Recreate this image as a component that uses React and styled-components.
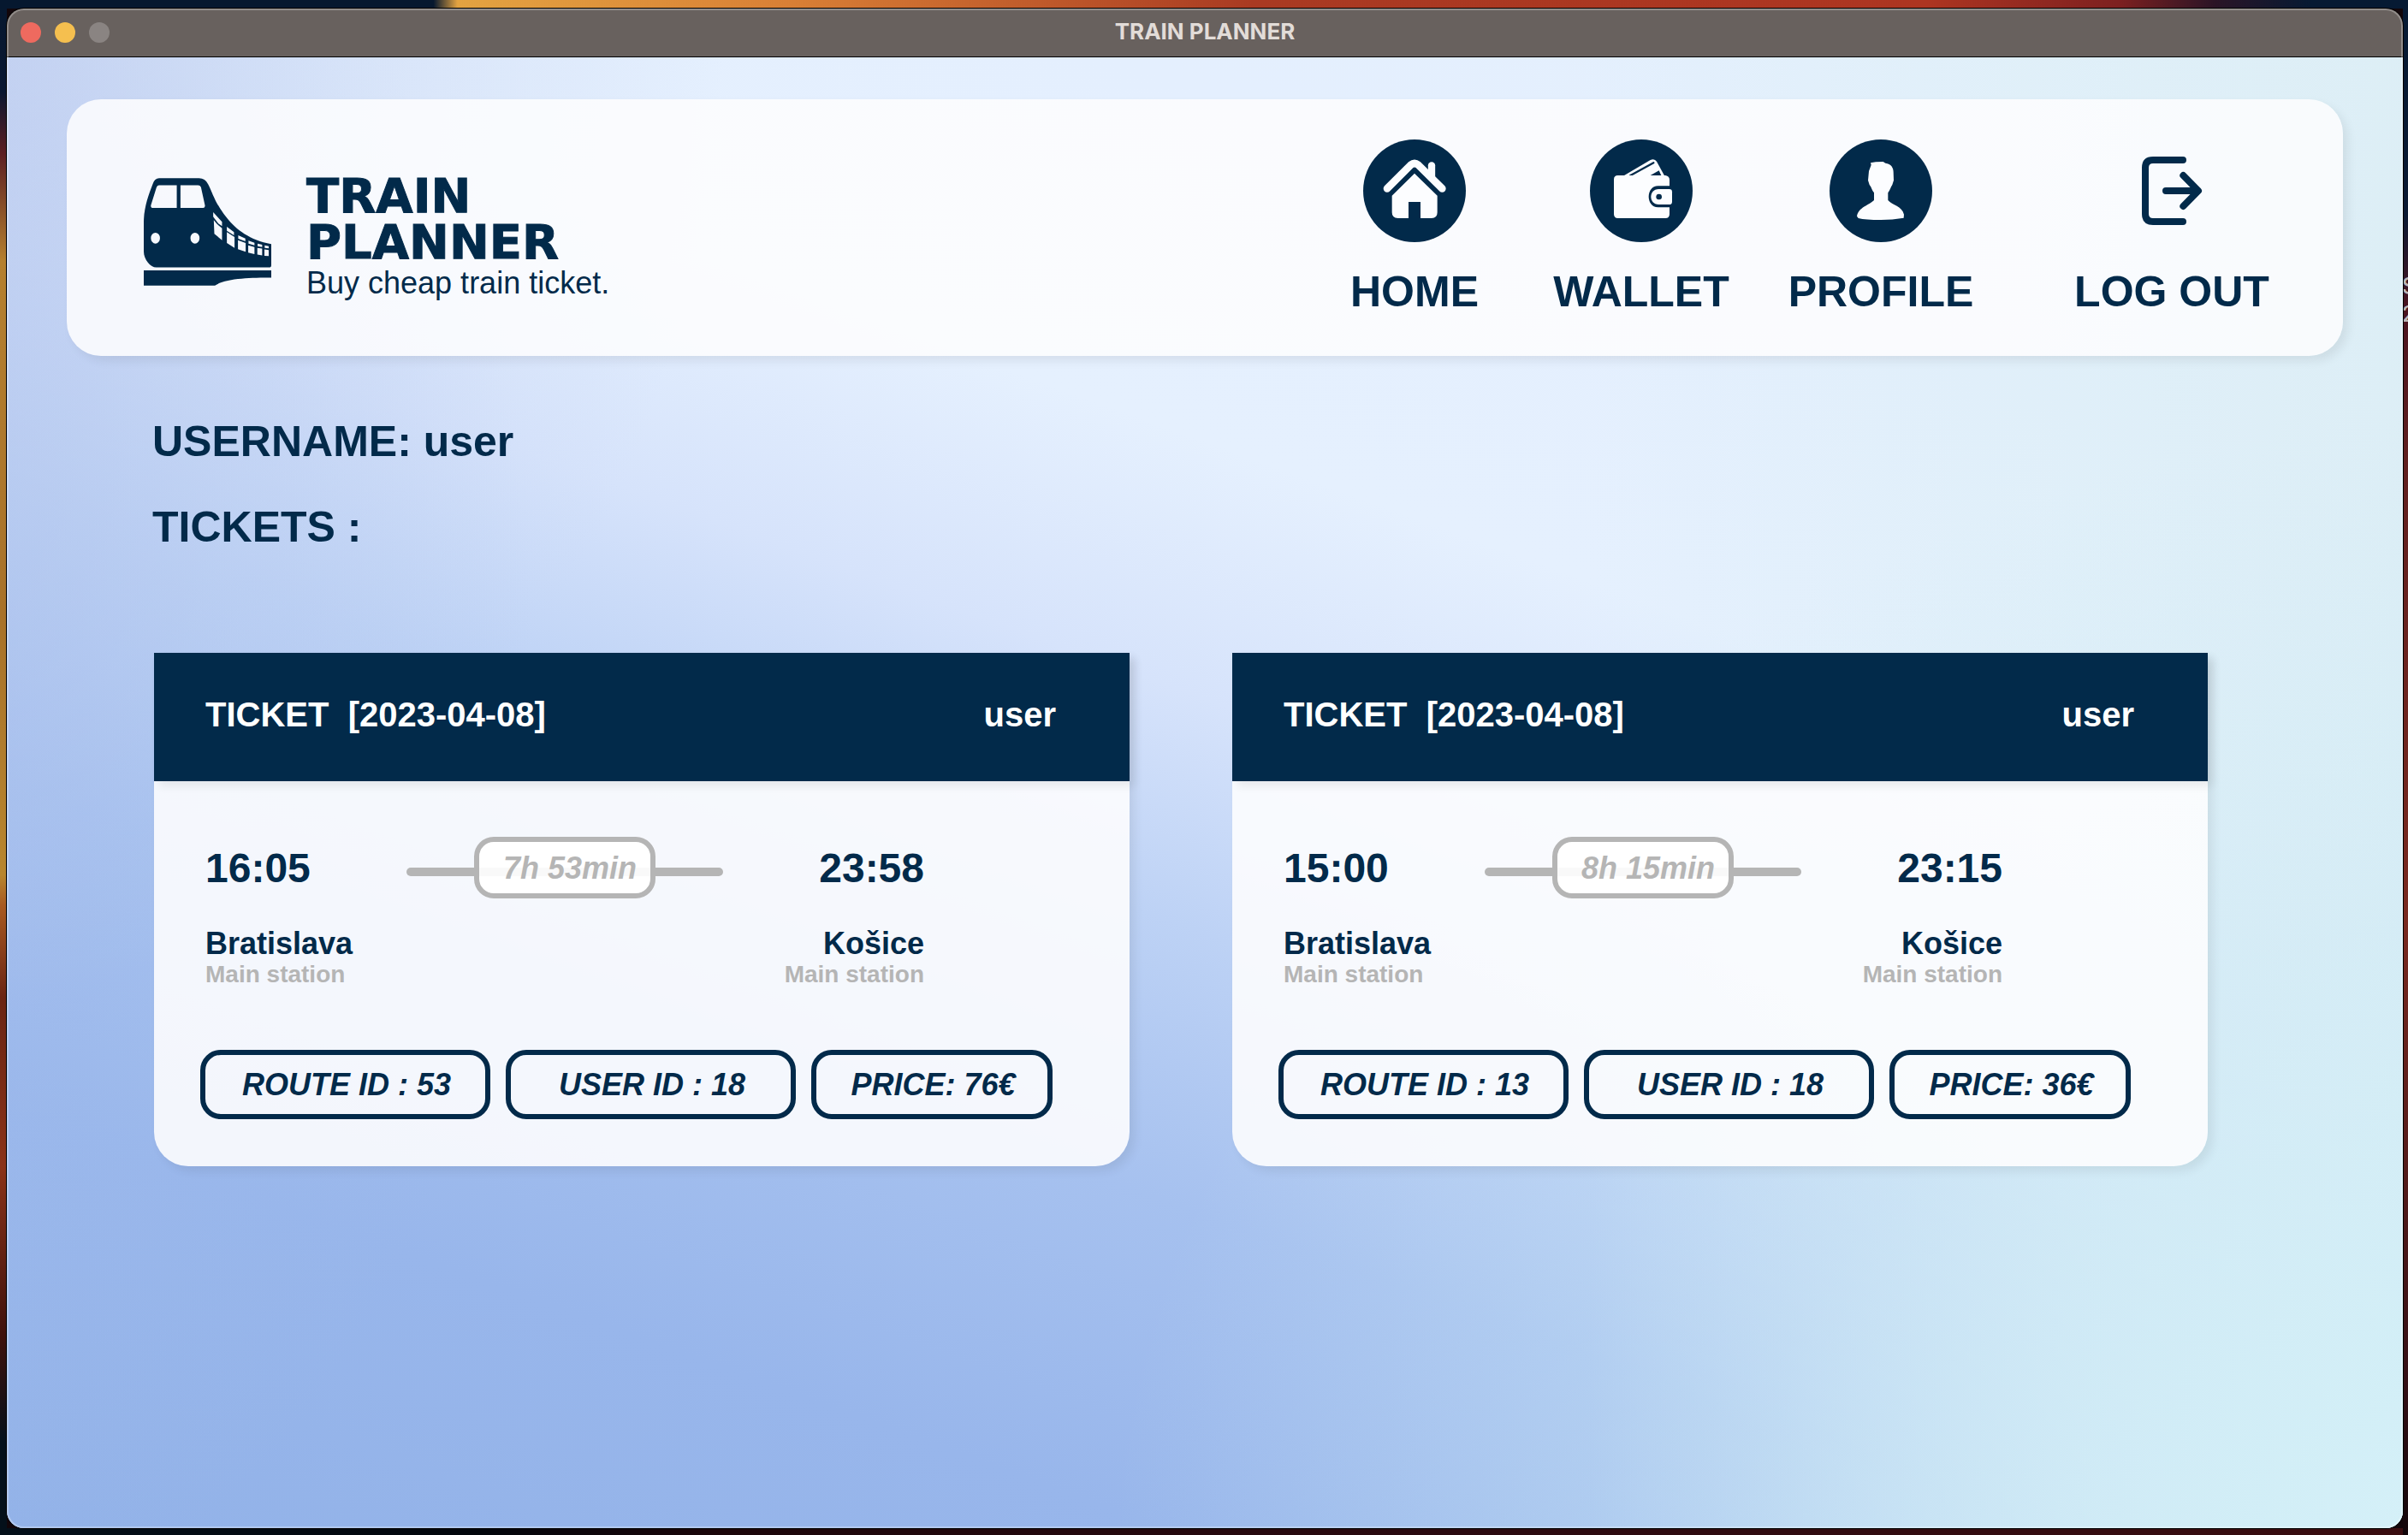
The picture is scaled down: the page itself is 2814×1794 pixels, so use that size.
import React from "react";
import styled, { createGlobalStyle } from "styled-components";

const navy = "#022a4a";
const grey = "#b5b5b5";

const GlobalStyle = createGlobalStyle`
  *, *::before, *::after { box-sizing: border-box; }
  body {
    margin: 0;
    font-family: "Liberation Sans", Arial, sans-serif;
    color: ${navy};
  }
`;

const Desktop = styled.div`
  position: relative;
  display: flex;
  min-height: 100vh;
  padding: 10px 6px 8px 8px;
  overflow: hidden;
  background-color: #12060a;
  background-image:
    linear-gradient(135deg, #06182f 50%, transparent 50%),
    linear-gradient(90deg, #06182f 0%, #06182f 18%, #e3a341 19%, #d97f35 33%, #a93a22 52%, #ad3521 80%, #7d2020 88%, #2a1426 92%, #061a33 96%),
    linear-gradient(180deg, #06182f 0%, #0a1730 6%, #5c1f22 10%, #b5802f 17%, #a8722a 40%, #b8862e 57%, #a85a22 59%, #6a2513 65%, #8a3318 76%, #3f120c 87%, #04101a 94%, #04101a 100%),
    linear-gradient(180deg, #061a33 0%, #0b1a33 14%, #4a1420 20%, #61201f 30%, #7a2a20 60%, #351016 90%, #12060a 100%),
    linear-gradient(90deg, #04101a 0%, #02060c 20%, #1c060a 30%, #2b0a10 60%, #3a0d10 100%);
  background-size: 538px 10px, 100% 10px, 8px 100%, 6px 100%, 100% 8px;
  background-position: 0 0, 0 0, 0 0, 100% 0, 0 100%;
  background-repeat: no-repeat;
`;

const DesktopLabel = styled.div`
  position: absolute;
  top: 318px;
  right: -11px;
  width: 18px;
  font: 500 25px/33px Inter, sans-serif;
  color: #bdb6b6;
`;

const Window = styled.div`
  position: relative;
  flex: 1;
  display: flex;
  flex-direction: column;
  border-radius: 20px;
  overflow: hidden;
  box-shadow: 0 0 0 1px #000;

  &::after {
    content: "";
    position: absolute;
    inset: 0;
    border: 2px solid rgba(255, 255, 255, 0.28);
    border-radius: 20px;
    pointer-events: none;
  }
`;

const TitleBar = styled.div`
  display: grid;
  grid-template-columns: 1fr auto 1fr;
  align-items: center;
  height: 57px;
  padding: 0 16px;
  background: #68615e;
  border-bottom: 1px solid #000;
`;

const Lights = styled.div`
  display: flex;
  gap: 16px;
`;

const Light = styled.button`
  width: 24px;
  height: 24px;
  padding: 0;
  border: 0;
  border-radius: 50%;
  background: ${(p) => p.$color};
`;

const WindowTitle = styled.div`
  font: 700 26px/32px Inter, sans-serif;
  color: #e2dcd8;
  padding-bottom: 2px;
`;

const Content = styled.main`
  flex: 1;
  padding: 49px 70px;
  background-color: #d5e3fb;
  background-image:
    radial-gradient(ellipse 62% 80% at 108% 104%, #d8f2fa 0%, rgba(210, 239, 247, 0.9) 22%, rgba(204, 234, 245, 0.45) 58%, rgba(200, 230, 244, 0) 100%),
    linear-gradient(270deg, rgba(220, 238, 245, 0.9) 0%, rgba(221, 239, 246, 0.65) 13%, rgba(226, 241, 250, 0) 34%),
    radial-gradient(ellipse 26% 66% at -4% 42%, rgba(160, 184, 234, 0.45) 0%, rgba(165, 190, 236, 0.2) 50%, rgba(180, 200, 240, 0) 100%),
    radial-gradient(ellipse 36% 70% at -6% -4%, rgba(190, 203, 238, 0.9) 0%, rgba(198, 212, 242, 0.5) 50%, rgba(214, 226, 248, 0) 100%),
    linear-gradient(200deg, #e4f0fc 0%, #e4effe 20%, #e5f0fe 35%, #d6e3fb 46%, #bdd2f5 56%, #a6c1ef 68%, #98b6eb 82%, #92b2e8 100%);
`;

const Header = styled.header`
  display: flex;
  justify-content: space-between;
  align-items: flex-start;
  height: 300px;
  padding: 47px 80px 0 90px;
  border-radius: 40px;
  background: rgba(253, 253, 254, 0.88);
  box-shadow: 6px 6px 12px rgba(0, 0, 0, 0.07);
`;

const Brand = styled.a`
  display: flex;
  gap: 41px;
  padding-top: 45px;
  color: inherit;
  text-decoration: none;
`;

const BrandName = styled.div`
  margin-top: -6px;
  font: 700 56px/54px "DejaVu Sans", sans-serif;
  -webkit-text-stroke: 1px ${navy};
`;

const Tagline = styled.div`
  font-size: 36px;
  line-height: 42px;
`;

const Nav = styled.nav`
  display: flex;
`;

const NavItem = styled.a`
  display: flex;
  flex-direction: column;
  align-items: center;
  gap: 30px;
  width: 240px;
  margin-left: ${(p) => p.$gap || 0}px;
  padding: 0;
  border: 0;
  background: none;
  color: inherit;
  font: 700 50px/56px "Liberation Sans", Arial, sans-serif;
  text-decoration: none;
  white-space: nowrap;

  svg { display: block; }
`;

const Summary = styled.section`
  padding: 72px 100px 119px;
`;

const Fact = styled.h2`
  margin: 0;
  font-size: 50px;
  line-height: 56px;

  & + & { margin-top: 44px; }
`;

const Tickets = styled.section`
  display: grid;
  grid-template-columns: repeat(2, 1fr);
  gap: 120px;
  padding: 0 158px 0 102px;
`;

const Card = styled.article`
  border-radius: 0 0 40px 40px;
  background: rgba(253, 253, 254, 0.9);
  box-shadow: 6px 6px 12px rgba(0, 0, 0, 0.07);
`;

const CardHead = styled.div`
  display: flex;
  justify-content: space-between;
  align-items: center;
  height: 150px;
  padding: 0 86px 6px 60px;
  background: ${navy};
  box-shadow: 6px 6px 10px rgba(0, 0, 0, 0.07);
  color: #fff;
  font-size: 40px;
  line-height: 46px;
  font-weight: 700;
  white-space: pre;
`;

const CardBody = styled.div`
  padding: 65px 90px 55px 54px;
`;

const Journey = styled.div`
  display: grid;
  grid-template-columns: 1fr 370px 1fr;
  align-items: center;
  row-gap: 33px;
  padding: 0 150px 0 6px;
  font-weight: 700;
`;

const Time = styled.div`
  padding-top: 2px;
  font-size: 48px;
  line-height: 56px;
  text-align: ${(p) => p.$align || "left"};
`;

const Rail = styled.div`
  display: flex;
  align-items: center;
  height: 72px;

  &::before, &::after {
    content: "";
    flex: 1;
    height: 10px;
    margin-top: 10px;
    background: ${grey};
  }
  &::before { border-radius: 5px 0 0 5px; }
  &::after { border-radius: 0 5px 5px 0; }
`;

const Duration = styled.div`
  width: 212px;
  height: 72px;
  padding-left: 12px;
  border: 6px solid ${grey};
  border-radius: 23px;
  background: linear-gradient(#f9f9f9, #f9f9f9) 0 30px / 100% 10px no-repeat #fff;
  color: ${grey};
  font-size: 36px;
  line-height: 62px;
  font-style: italic;
  text-align: center;
`;

const Stop = styled.div`
  grid-column: ${(p) => p.$column};
  text-align: ${(p) => p.$align || "left"};
`;

const City = styled.div`
  font-size: 36px;
  line-height: 40px;
`;

const Station = styled.div`
  color: ${grey};
  font-size: 28px;
  line-height: 32px;
  white-space: nowrap;
`;

const Chips = styled.div`
  display: flex;
  gap: 18px;
  margin-top: 72px;
`;

const Chip = styled.div`
  flex: ${(p) => p.$grow} 1 0;
  height: 81px;
  padding-left: 3px;
  border: 6px solid ${navy};
  border-radius: 24px;
  font-size: 36px;
  line-height: 69px;
  font-weight: 700;
  font-style: italic;
  text-align: center;
  white-space: nowrap;
`;

const TrainLogo = () => (
  <svg width="149" height="126" viewBox="24 24 448 378" aria-hidden="true">
    <path
      fill={navy}
      fillRule="evenodd"
      d="M78 24H218Q240 24 250 45C262 68 272 100 292 130C330 190 380 238 472 256V330Q472 338 464 338H68C48 338 24 310 24 282V180C24 130 40 84 56 44Q62 24 78 24Z
      M78 49Q72 49 69 56L49 120Q48 129 57 129H140V49Z
      M153 49V129H232Q240 129 239 120L225 56Q222 49 215 49Z
      M65 216A16 19 0 1 0 65 254A16 19 0 1 0 65 216Z
      M204 216A16 19 0 1 0 204 254A16 19 0 1 0 204 216Z
      M268 144L299 178V193L286 184L268 160Z M270 172L282 186L299 200V242L272 220Z
      M316 195L341 214V225L316 209Z M316 214L343 231V269L316 252Z
      M356 225L381 236V246L356 237Z M355 242L382 252V283L355 274Z
      M392 244L413 251V260L392 254Z M391 260L413 266V291L391 286Z
      M424 254L440 258V266L424 263Z M423 269L440 272V296L423 293Z
      M449 260L463 263V271L449 269Z M448 275L463 277V298L448 297Z"
    />
    <path fill={navy} d="M24 348H472V374C400 374 310 376 274 402H24Z" />
  </svg>
);

const HomeIcon = () => (
  <svg width="120" height="120" viewBox="9 9 360 360" aria-hidden="true">
    <circle cx="189" cy="189" r="180" fill={navy} />
    <path fill="#fcfdff" d="M189 128L269 206V265Q269 285 249 285H210V228H168V285H131Q110 285 110 265V206Z" />
    <path d="M93 181L176 98Q189 88 202 98L286 181" fill="none" stroke="#fcfdff" strokeWidth="26" strokeLinecap="round" />
    <path d="M249 100V140" stroke="#fcfdff" strokeWidth="25" strokeLinecap="round" />
  </svg>
);

const WalletIcon = () => (
  <svg width="120" height="120" viewBox="9 9 360 360" aria-hidden="true">
    <circle cx="189" cy="189" r="180" fill={navy} />
    <path fill="#fcfdff" d="M128 136L221 81Q235 74 243 86L270 136Z" />
    <path d="M150 136L232 91" stroke={navy} strokeWidth="7" strokeLinecap="round" />
    <path fill={navy} d="M221 135L251 118L259 135Z" />
    <path fill="#fcfdff" d="M107 135H274Q288 138 288 151V172H248C204 172 204 247 248 247H288V271Q288 285 274 285H107Q93 285 93 271V149Q93 135 107 135Z" />
    <path fill="#fcfdff" d="M250 183H287Q297 183 297 193V227Q297 237 287 237H250C214 237 214 183 250 183Z" />
    <circle cx="251" cy="210" r="10" fill={navy} />
  </svg>
);

const ProfileIcon = () => (
  <svg width="120" height="120" viewBox="24 9 360 360" aria-hidden="true">
    <circle cx="204" cy="189" r="180" fill={navy} />
    <path
      fill="#fcfdff"
      d="M168 91L186 88L212 87L220 92C240 94 248 108 248 124L249 152L244 168C238 176 236 188 229 196V222C244 240 278 242 285 272L284 284Q244 291 204 291Q150 291 125 285L120 278C126 246 162 240 180 222V196C172 188 172 176 164 168L159 152L162 120L170 98Z"
    />
  </svg>
);

const LogoutIcon = () => (
  <svg width="120" height="120" viewBox="1044 9 360 360" aria-hidden="true">
    <g fill="none" stroke={navy} strokeWidth="24" strokeLinecap="round" strokeLinejoin="round">
      <path d="M1263 81H1158Q1131 81 1131 108V270Q1131 297 1158 297H1263" />
      <path d="M1203 189H1314M1264 135L1317 189L1264 243" />
    </g>
  </svg>
);

const tickets = [
  { date: "2023-04-08", user: "user", depart: "16:05", arrive: "23:58", duration: "7h 53min", from: "Bratislava", to: "Košice", route: 53, userId: 18, price: 76 },
  { date: "2023-04-08", user: "user", depart: "15:00", arrive: "23:15", duration: "8h 15min", from: "Bratislava", to: "Košice", route: 13, userId: 18, price: 36 },
];

const Ticket = ({ t }) => (
  <Card>
    <CardHead>
      <span>{`TICKET  [${t.date}]`}</span>
      <span>{t.user}</span>
    </CardHead>
    <CardBody>
      <Journey>
        <Time>{t.depart}</Time>
        <Rail>
          <Duration>{t.duration}</Duration>
        </Rail>
        <Time $align="right">{t.arrive}</Time>
        <Stop $column="1">
          <City>{t.from}</City>
          <Station>Main station</Station>
        </Stop>
        <Stop $column="3" $align="right">
          <City>{t.to}</City>
          <Station>Main station</Station>
        </Stop>
      </Journey>
      <Chips>
        <Chip $grow={34}>{`ROUTE ID : ${t.route}`}</Chip>
        <Chip $grow={34}>{`USER ID : ${t.userId}`}</Chip>
        <Chip $grow={28}>{`PRICE: ${t.price}€`}</Chip>
      </Chips>
    </CardBody>
  </Card>
);

export default function App() {
  return (
    <Desktop>
      <GlobalStyle />
      <DesktopLabel>
        <div>S</div>
        <div>2</div>
      </DesktopLabel>
      <Window>
        <TitleBar>
          <Lights>
            <Light $color="#ee6a5f" aria-label="Close" />
            <Light $color="#f5bf4f" aria-label="Minimize" />
            <Light $color="#8a8482" aria-label="Zoom" />
          </Lights>
          <WindowTitle>TRAIN PLANNER</WindowTitle>
        </TitleBar>
        <Content>
          <Header>
            <Brand href="#home">
              <TrainLogo />
              <div>
                <BrandName>
                  TRAIN
                  <br />
                  PLANNER
                </BrandName>
                <Tagline>Buy cheap train ticket.</Tagline>
              </div>
            </Brand>
            <Nav>
              <NavItem href="#home">
                <HomeIcon />
                HOME
              </NavItem>
              <NavItem href="#wallet" $gap={25}>
                <WalletIcon />
                WALLET
              </NavItem>
              <NavItem href="#profile" $gap={40}>
                <ProfileIcon />
                PROFILE
              </NavItem>
              <NavItem as="button" type="button" $gap={100}>
                <LogoutIcon />
                LOG OUT
              </NavItem>
            </Nav>
          </Header>
          <Summary>
            <Fact>USERNAME: user</Fact>
            <Fact>TICKETS :</Fact>
          </Summary>
          <Tickets>
            {tickets.map((t) => (
              <Ticket key={t.route} t={t} />
            ))}
          </Tickets>
        </Content>
      </Window>
    </Desktop>
  );
}
